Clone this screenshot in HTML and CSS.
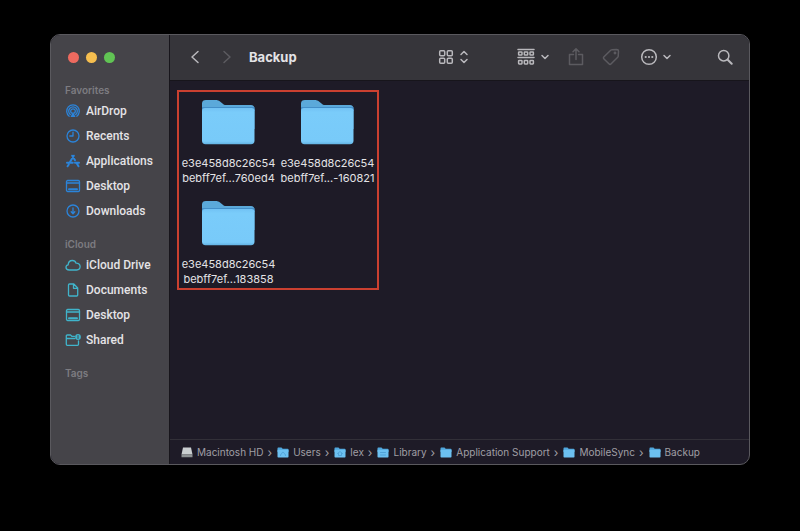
FILE: index.html
```html
<!DOCTYPE html>
<html lang="en">
<head>
    <meta charset="UTF-8">
    <meta name="viewport" content="width=device-width, initial-scale=1.0">
    <title>Backup</title>
    <link rel="stylesheet" href="styles.css">
</head>
<body>
    <!-- shared folder shapes -->
    <svg class="defs" width="0" height="0" aria-hidden="true">
        <defs>
            <linearGradient id="folderFront" x1="0" y1="0" x2="0" y2="1">
                <stop offset="0" stop-color="#72c2f4"/>
                <stop offset="0.12" stop-color="#7accfa"/>
                <stop offset="0.92" stop-color="#78caf9"/>
                <stop offset="1" stop-color="#62b2e2"/>
            </linearGradient>
            <symbol id="folder" viewBox="1 0 53 46">
                <path fill="#5ba9da" d="M1 4.500C1 2 2.500 1 5 1h9.500c2 0 3.200.5 4.500 1.500l2.500 2C22.700 5.500 23.500 6 25 6h25c2.200 0 3.500 1.500 3.500 3.500V30H1z"/>
                <path fill="#438fc9" d="M1 8h52.300l.2 2v2H1z"/>
                <path fill="url(#folderFront)" d="M1 11.500c0-1.500 1-2.500 3-2.500h46.500c2 0 3 1 3 2.500v30c0 2.500-1.200 3.700-3.500 3.700H4.500c-2.300 0-3.500-1.200-3.500-3.700z"/>
            </symbol>
            <symbol id="folder-small" viewBox="0 0 12 11">
                <path fill="#4fa6dc" d="M.5 1.500c0-.7.400-1 1-1h3l1.200 1.200h5c.5 0 .8.3.8.8V5H.5z"/>
                <path fill="#6cc0f0" d="M.5 2.700h11V9.700c0 .5-.3.800-.8.800H1.300c-.5 0-.8-.3-.8-.8z"/>
            </symbol>
            <symbol id="desktop" viewBox="0 0 16 16">
                <rect x="1.500" y="2.500" width="13" height="11" rx="1.200"/>
                <path d="M1.500 5h13"/>
                <path d="M4 11.200h8" stroke-width="2"/>
            </symbol>
        </defs>
    </svg>

    <div class="window">
        <aside class="sidebar">
            <div class="traffic-lights">
                <button class="light close" aria-label="Close"></button>
                <button class="light minimize" aria-label="Minimize"></button>
                <button class="light zoom" aria-label="Zoom"></button>
            </div>

            <nav class="group favorites">
                <h2>Favorites</h2>
                <a href="#">
                    <svg viewBox="0 0 16 16"><path d="M4.200 13.200a6.300 6.300 0 1 1 7.600 0"/><path d="M5.300 11.500a4.300 4.300 0 1 1 5.400 0"/><path d="M6.600 10a2.300 2.300 0 1 1 2.800 0"/><path d="M8 8.500L5.500 14h5z" fill="currentColor" stroke="none"/></svg>
                    AirDrop
                </a>
                <a href="#">
                    <svg viewBox="0 0 16 16"><circle cx="8" cy="8" r="6"/><path d="M8 4.200V8H4.800"/></svg>
                    Recents
                </a>
                <a href="#">
                    <svg viewBox="0 0 16 16"><path stroke-width="2" d="M7.200 2.700L10 7.200M11.700 10.300l1.800 3M8.800 2.700L5 9M3.800 11.500l-1.200 1.800M2 9.800h5.800M10 9.800h4"/></svg>
                    Applications
                </a>
                <a href="#">
                    <svg><use href="#desktop"/></svg>
                    Desktop
                </a>
                <a href="#">
                    <svg viewBox="0 0 16 16"><circle cx="8" cy="8" r="6"/><path d="M8 5v5.500M6.200 8.800L8 10.700l1.800-1.900"/></svg>
                    Downloads
                </a>
            </nav>

            <nav class="group icloud">
                <h2>iCloud</h2>
                <a href="#">
                    <svg viewBox="0 0 16 16"><path d="M4.200 13C2.300 13 1 11.900 1 10.300c0-1.400 1-2.300 2.200-2.500C3.300 5 5.200 3.500 7.400 3.500c1.800 0 3.100 1 3.700 2.700 2.300-.1 4 1.300 4 3.400 0 2-1.400 3.400-3.400 3.400z"/></svg>
                    iCloud Drive
                </a>
                <a href="#">
                    <svg viewBox="0 0 16 16"><path d="M3.500 3c0-.6.400-1 1-1h4.300l3.900 4v7c0 .6-.4 1-1 1H4.500c-.6 0-1-.4-1-1zM8.500 2v4.300h4"/></svg>
                    Documents
                </a>
                <a href="#">
                    <svg><use href="#desktop"/></svg>
                    Desktop
                </a>
                <a href="#">
                    <svg viewBox="0 0 16 16"><path d="M9.500 4.300H6.800L5.500 3H2.300c-.6 0-1 .4-1 1v8.300c0 .6.400 1 1 1h10.200c.6 0 1-.4 1-1V9M1.300 6.500h8.500"/><circle cx="13" cy="5" r="2.900" fill="currentColor" stroke="none"/><path d="M13 3.500v3" stroke="#454449" stroke-width="1"/></svg>
                    Shared
                </a>
            </nav>

            <nav class="group tags">
                <h2>Tags</h2>
            </nav>
        </aside>

        <main class="content">
            <header class="toolbar">
                <div class="navigation">
                    <button aria-label="Back"><svg width="10" height="16" viewBox="0 0 10 16"><path d="M8 2.500L2 8l6 5.500"/></svg></button>
                    <button aria-label="Forward" disabled><svg width="10" height="16" viewBox="0 0 10 16"><path d="M2 2.500L8 8l-6 5.500"/></svg></button>
                </div>
                <h1>Backup</h1>
                <div class="actions">
                    <button class="view" aria-label="Icon view">
                        <svg width="16" height="16" viewBox="0 0 16 16"><rect x="1.700" y="1.700" width="5" height="5" rx="1"/><rect x="9.300" y="1.700" width="5" height="5" rx="1"/><rect x="1.700" y="9.300" width="5" height="5" rx="1"/><rect x="9.300" y="9.300" width="5" height="5" rx="1"/></svg>
                        <svg width="10" height="16" viewBox="0 0 10 16"><path d="M2 5.500l3-3 3 3M2 10.500l3 3 3-3"/></svg>
                    </button>
                    <button class="arrange" aria-label="Group items">
                        <svg width="18" height="18" viewBox="0 0 18 18"><path d="M1 1.500h16M1 9.500h16"/><rect x="1.600" y="4" width="3.400" height="3" rx=".6"/><rect x="7.300" y="4" width="3.400" height="3" rx=".6"/><rect x="13" y="4" width="3.400" height="3" rx=".6"/><rect x="1.600" y="12.500" width="3.400" height="3.400" rx=".6"/><rect x="7.300" y="12.500" width="3.400" height="3.400" rx=".6"/><rect x="13" y="12.500" width="3.400" height="3.400" rx=".6"/></svg>
                        <svg width="10" height="10" viewBox="0 0 10 10"><path d="M2 3.500l3 3 3-3"/></svg>
                    </button>
                    <button class="share" aria-label="Share" disabled>
                        <svg width="16" height="20" viewBox="0 0 16 20"><path d="M5.500 7.500h-4v10h13v-10h-4M8 12.500V2M5 4.700L8 1.700l3 3"/></svg>
                    </button>
                    <button class="tag" aria-label="Edit tags" disabled>
                        <svg width="18" height="18" viewBox="0 0 18 18"><path d="M9.800 1.800l5-.3c1 0 1.700.7 1.700 1.700l-.3 5c0 .4-.2.800-.5 1.100l-6.500 6.500c-.7.700-1.600.7-2.300 0L2 11c-.7-.7-.7-1.600 0-2.300l6.700-6.400c.3-.3.700-.5 1.100-.5z"/><circle cx="13" cy="5" r=".7"/></svg>
                    </button>
                    <button class="more" aria-label="More actions">
                        <svg width="18" height="18" viewBox="0 0 18 18"><circle cx="9" cy="9" r="7.300"/><g fill="currentColor" stroke="none"><circle cx="5.700" cy="9" r="1.100"/><circle cx="9" cy="9" r="1.100"/><circle cx="12.300" cy="9" r="1.100"/></g></svg>
                        <svg width="10" height="10" viewBox="0 0 10 10"><path d="M2 3.500l3 3 3-3"/></svg>
                    </button>
                    <button class="search" aria-label="Search">
                        <svg width="16" height="16" viewBox="0 0 16 16"><circle cx="6.700" cy="6.700" r="5.200"/><path d="M10.700 10.700l4 4" stroke-width="2"/></svg>
                    </button>
                </div>
            </header>

            <section class="files">
                <ul class="highlight">
                    <li>
                        <svg class="folder"><use href="#folder"/></svg>
                        <span>e3e458d8c26c54<br>bebff7ef...760ed4</span>
                    </li>
                    <li>
                        <svg class="folder"><use href="#folder"/></svg>
                        <span>e3e458d8c26c54<br>bebff7ef...-160821</span>
                    </li>
                    <li>
                        <svg class="folder"><use href="#folder"/></svg>
                        <span>e3e458d8c26c54<br>bebff7ef...183858</span>
                    </li>
                </ul>
            </section>

            <footer class="path-bar">
                <a href="#"><svg viewBox="0 0 12 11"><path fill="#c9ced0" d="M2 .5h8l1.500 7H.5z"/><path fill="#8d9294" d="M.5 7.500h11v2.700H.5z"/></svg>Macintosh HD</a>
                <span class="sep">›</span>
                <a href="#"><svg viewBox="0 0 12 11"><use href="#folder-small"/><path d="M3.500 8.500c0-2 1.500-1.500 1.500-2.500s1.800-1 2 0 1.500.5 1.500 2.500" fill="none" stroke="#4a9bd0" stroke-width=".8"/></svg>Users</a>
                <span class="sep">›</span>
                <a href="#"><svg viewBox="0 0 12 11"><use href="#folder-small"/><path d="M3.500 6.500L6 4.500l2.500 2M4.500 6.500v2h3v-2" fill="none" stroke="#4a9bd0" stroke-width=".8"/></svg>lex</a>
                <span class="sep">›</span>
                <a href="#"><svg viewBox="0 0 12 11"><use href="#folder-small"/><path d="M3.500 5.500h5M3.500 8h5" fill="none" stroke="#4a9bd0" stroke-width=".8"/></svg>Library</a>
                <span class="sep">›</span>
                <a href="#"><svg><use href="#folder-small"/></svg>Application Support</a>
                <span class="sep">›</span>
                <a href="#"><svg><use href="#folder-small"/></svg>MobileSync</a>
                <span class="sep">›</span>
                <a href="#"><svg><use href="#folder-small"/></svg>Backup</a>
            </footer>
        </main>
    </div>
</body>
</html>
```
FILE: styles.css
```css
* {
    box-sizing: border-box;
}
body {
    margin: 0;
    min-height: 100vh;
    padding: 34px 50px 66px;
    display: flex;
    background-color: #000;
    color: #e4e3e6;
    font-family: Inter, "Liberation Sans", sans-serif;
    font-size: 12px;
}
h1, h2, ul {
    margin: 0;
    padding: 0;
}
a {
    color: inherit;
    text-decoration: none;
}
button {
    display: flex;
    align-items: center;
    padding: 0;
    border: none;
    background: none;
    color: #b9b8bc;
}
button:disabled {
    color: #5c5b60;
}
svg {
    fill: none;
    stroke: currentColor;
    stroke-width: 1.3;
    stroke-linecap: round;
    stroke-linejoin: round;
}
.defs {
    position: absolute;
}
.window {
    flex: 1;
    display: flex;
    overflow: hidden;
    border: 1px solid #5a595e;
    border-radius: 10px;
    background-color: #1e1b27;
}

/* Sidebar */
.sidebar {
    width: 119px;
    flex-shrink: 0;
    padding: 17px 0 0 14px;
    background-color: #454449;
    border-right: 1px solid #17151b;
}
.traffic-lights {
    display: flex;
    gap: 7px;
    padding-left: 3px;
    margin-bottom: 19px;
}
.light {
    width: 11px;
    height: 11px;
    border-radius: 50%;
}
.close {
    background-color: #ed6a5f;
}
.minimize {
    background-color: #f5be4f;
}
.zoom {
    background-color: #61c454;
}
.group {
    margin-bottom: 13px;
}
.group h2 {
    font-size: 10px;
    line-height: 16px;
    font-weight: 600;
    color: #7d7c81;
}
.group a {
    display: flex;
    align-items: center;
    gap: 5px;
    height: 25px;
    white-space: nowrap;
    font-family: Roboto, "Liberation Sans", sans-serif;
    font-weight: 500;
}
.group svg {
    width: 16px;
    height: 16px;
    flex-shrink: 0;
}
.favorites svg {
    color: #2b84da;
}
.icloud svg {
    color: #40b4cb;
}

/* Toolbar */
.content {
    flex: 1;
    min-width: 0;
    display: flex;
    flex-direction: column;
}
.toolbar {
    display: flex;
    align-items: center;
    height: 46px;
    padding: 0 16px 2px 20px;
    background-color: #36353a;
    border-bottom: 1px solid #17151b;
}
.toolbar svg {
    stroke-width: 1.5;
}
.navigation {
    display: flex;
    gap: 22px;
    margin-right: 17px;
}
.toolbar h1 {
    font-size: 13px;
    font-weight: 700;
}
.actions {
    display: flex;
    align-items: center;
    margin-left: auto;
}
.view {
    gap: 5px;
    margin-right: 48px;
}
.arrange {
    gap: 5px;
    margin-right: 18px;
}
.share {
    margin-right: 18px;
}
.tag {
    margin-right: 20px;
}
.more {
    gap: 4px;
    margin-right: 45px;
}

/* Files */
.files {
    flex: 1;
    padding: 9px 7px;
}
.highlight {
    display: inline-grid;
    grid-template-columns: 99px 99px;
    row-gap: 14px;
    padding: 7px 0 1px;
    border: 2px solid #cb4030;
    list-style: none;
}
.highlight li {
    display: flex;
    flex-direction: column;
    align-items: center;
    gap: 11px;
    text-align: center;
    font-size: 11px;
    line-height: 15px;
}
.folder {
    width: 53px;
    height: 46px;
    stroke: none;
}

/* Path bar */
.path-bar {
    display: flex;
    align-items: center;
    gap: 4px;
    height: 25px;
    padding: 0 11px;
    border-top: 1px solid #323038;
    color: #a09fa5;
    font-size: 10px;
    white-space: nowrap;
}
.path-bar a {
    display: flex;
    align-items: center;
    gap: 4px;
}
.path-bar svg {
    width: 12px;
    height: 11px;
    stroke: none;
}
.sep {
    margin-right: 1px;
    font-size: 12px;
}
```
